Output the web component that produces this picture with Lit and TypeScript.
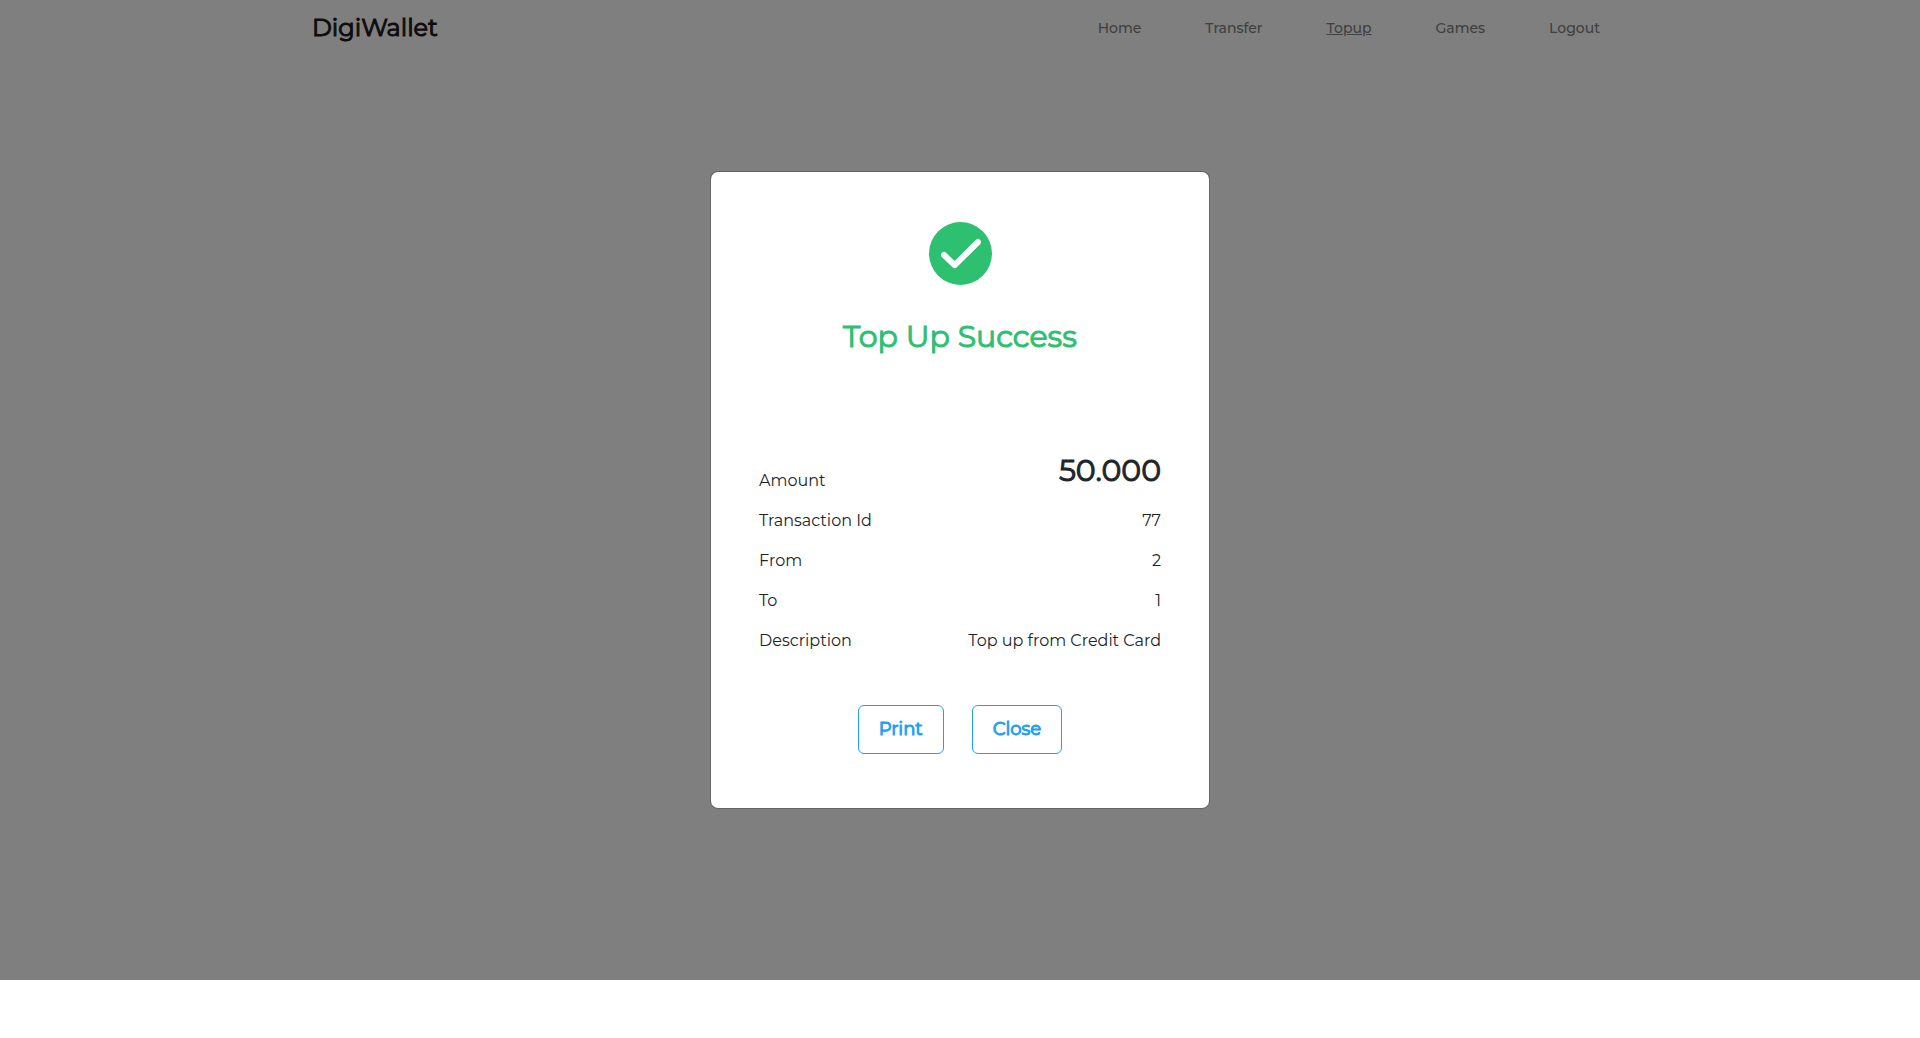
import { LitElement, html, css } from "lit";
import { customElement, property, state } from "lit/decorators.js";
import { classMap } from "lit/directives/class-map.js";

interface Receipt {
  amount: string;
  rows: { label: string; value: string }[];
}

@customElement("wallet-header")
class WalletHeader extends LitElement {
  @property() active = "";

  static styles = css`
    :host {
      display: block;
    }
    .bar {
      display: flex;
      align-items: center;
      justify-content: space-between;
      box-sizing: border-box;
      max-width: 1320px;
      min-height: 56px;
      margin: 0 auto;
      padding: 0 20px 0 12px;
    }
    .brand {
      color: #1a1a1a;
      font-size: 24px;
      line-height: 32px;
      text-decoration: none;
      -webkit-text-stroke: 1px currentColor;
    }
    .links {
      display: flex;
      align-items: center;
      gap: 64px;
    }
    .link {
      padding: 0;
      border: 0;
      background: none;
      color: #808080;
      font: inherit;
      font-size: 14px;
      line-height: 24px;
      font-weight: 500;
      text-decoration: none;
      cursor: pointer;
    }
    .active {
      text-decoration: underline;
    }
  `;

  render() {
    const links = ["Home", "Transfer", "Topup", "Games"];
    return html`
      <header class="bar">
        <a class="brand" href="#home">DigiWallet</a>
        <nav class="links">
          ${links.map(
            (name) => html`<a
              class=${classMap({ link: true, active: name === this.active })}
              href="#${name.toLowerCase()}"
              >${name}</a
            >`
          )}
          <button class="link" type="button">Logout</button>
        </nav>
      </header>
    `;
  }
}

@customElement("receipt-dialog")
class ReceiptDialog extends LitElement {
  @property({ attribute: false }) receipt!: Receipt;

  static styles = css`
    :host {
      display: block;
      width: 100%;
      max-width: 500px;
    }
    .card {
      display: flex;
      flex-direction: column;
      box-sizing: border-box;
      padding: 50px 48px 54px;
      border: 1px solid rgba(0, 0, 0, 0.2);
      border-radius: 8px;
      background: #fff;
      background-clip: padding-box;
      color: #212529;
    }
    .icon {
      align-self: center;
      width: 63px;
      height: 63px;
    }
    .title {
      margin: 32px 0 0;
      color: #2ec071;
      font-size: 30px;
      line-height: 40px;
      font-weight: 400;
      text-align: center;
      -webkit-text-stroke: 1px currentColor;
    }
    .rows {
      display: flex;
      flex-direction: column;
      gap: 16px;
      margin: 92px 0 0;
    }
    .row {
      display: flex;
      align-items: flex-end;
      justify-content: space-between;
      font-size: 16px;
      line-height: 24px;
    }
    .value {
      margin: 0;
      text-align: right;
    }
    .amount {
      font-size: 30px;
      line-height: 44px;
      -webkit-text-stroke: 1px currentColor;
    }
    .actions {
      display: flex;
      justify-content: center;
      gap: 28px;
      margin-top: 52px;
    }
    .action {
      padding: 11px 20px 12px;
      border: 1px solid #1da1f2;
      border-radius: 6px;
      background: #fff;
      color: #1da1f2;
      font: inherit;
      font-size: 18px;
      line-height: 24px;
      -webkit-text-stroke: 1px currentColor;
      cursor: pointer;
    }
  `;

  private close() {
    this.dispatchEvent(new CustomEvent("dialog-close"));
  }

  render() {
    return html`
      <section class="card" role="dialog" aria-modal="true" aria-labelledby="title">
        <svg class="icon" viewBox="0 0 63 63" aria-hidden="true">
          <circle cx="31.5" cy="31.5" r="31.5" fill="#2ec071" />
          <path
            d="M15 33 L25.7 43.2 L49 20"
            fill="none"
            stroke="#fff"
            stroke-width="6"
            stroke-linecap="round"
            stroke-linejoin="round"
          />
        </svg>
        <h1 class="title" id="title">Top Up Success</h1>
        <dl class="rows">
          <div class="row">
            <dt>Amount</dt>
            <dd class="value amount">${this.receipt.amount}</dd>
          </div>
          ${this.receipt.rows.map(
            (row) => html`<div class="row">
              <dt>${row.label}</dt>
              <dd class="value">${row.value}</dd>
            </div>`
          )}
        </dl>
        <div class="actions">
          <button class="action" type="button" @click=${() => window.print()}>Print</button>
          <button class="action" type="button" @click=${this.close}>Close</button>
        </div>
      </section>
    `;
  }
}

@customElement("app-root")
class AppRoot extends LitElement {
  @state() private open = true;

  private receipt: Receipt = {
    amount: "50.000",
    rows: [
      { label: "Transaction Id", value: "77" },
      { label: "From", value: "2" },
      { label: "To", value: "1" },
      { label: "Description", value: "Top up from Credit Card" },
    ],
  };

  static styles = css`
    :host {
      display: block;
      position: relative;
      box-sizing: border-box;
      min-height: 100vh;
      background: #fff;
      font-family: Montserrat, Inter, "Open Sans", sans-serif;
    }
    .backdrop {
      position: absolute;
      inset: 0 0 58px;
      display: flex;
      align-items: center;
      justify-content: center;
      background: rgba(0, 0, 0, 0.5);
    }
  `;

  render() {
    return html`
      <wallet-header active="Topup"></wallet-header>
      ${this.open
        ? html`<div class="backdrop">
            <receipt-dialog
              .receipt=${this.receipt}
              @dialog-close=${() => (this.open = false)}
            ></receipt-dialog>
          </div>`
        : null}
    `;
  }
}
